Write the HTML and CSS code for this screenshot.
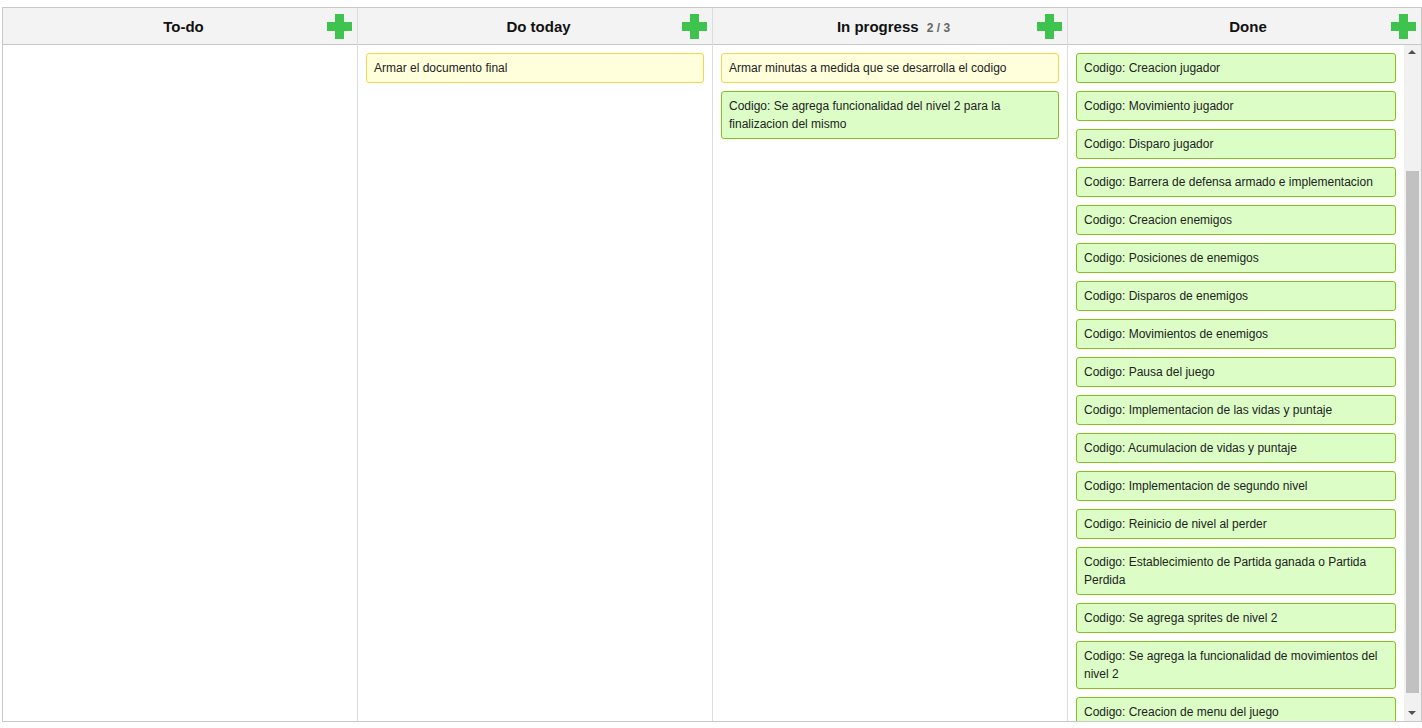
FILE: index.html
```html
<!DOCTYPE html>
<html>
<head>
<meta charset="utf-8">
<link rel="stylesheet" href="styles.css">
</head>
<body>
<div class="board">
  <div class="column">
    <div class="col-header"><span class="title">To-do</span><span class="add"></span></div>
    <div class="col-body"><div class="cards"></div></div>
  </div>
  <div class="column">
    <div class="col-header"><span class="title">Do today</span><span class="add"></span></div>
    <div class="col-body"><div class="cards">
      <div class="card yellow">Armar el documento final</div>
    </div></div>
  </div>
  <div class="column">
    <div class="col-header"><span class="title">In progress <span class="count">2 / 3</span></span><span class="add"></span></div>
    <div class="col-body"><div class="cards">
      <div class="card yellow">Armar minutas a medida que se desarrolla el codigo</div>
      <div class="card green">Codigo: Se agrega funcionalidad del nivel 2 para la finalizacion del mismo</div>
    </div></div>
  </div>
  <div class="column last">
    <div class="col-header"><span class="title">Done</span><span class="add"></span></div>
    <div class="col-body">
      <div class="cards">
        <div class="card green">Codigo: Creacion jugador</div>
        <div class="card green">Codigo: Movimiento jugador</div>
        <div class="card green">Codigo: Disparo jugador</div>
        <div class="card green">Codigo: Barrera de defensa armado e implementacion</div>
        <div class="card green">Codigo: Creacion enemigos</div>
        <div class="card green">Codigo: Posiciones de enemigos</div>
        <div class="card green">Codigo: Disparos de enemigos</div>
        <div class="card green">Codigo: Movimientos de enemigos</div>
        <div class="card green">Codigo: Pausa del juego</div>
        <div class="card green">Codigo: Implementacion de las vidas y puntaje</div>
        <div class="card green">Codigo: Acumulacion de vidas y puntaje</div>
        <div class="card green">Codigo: Implementacion de segundo nivel</div>
        <div class="card green">Codigo: Reinicio de nivel al perder</div>
        <div class="card green">Codigo: Establecimiento de Partida ganada o Partida Perdida</div>
        <div class="card green">Codigo: Se agrega sprites de nivel 2</div>
        <div class="card green">Codigo: Se agrega la funcionalidad de movimientos del nivel 2</div>
        <div class="card green">Codigo: Creacion de menu del juego</div>
      </div>
      <div class="scrollbar">
        <div class="arrow up"></div>
        <div class="thumb"></div>
        <div class="arrow down"></div>
      </div>
    </div>
  </div>
</div>
</body>
</html>
```

FILE: styles.css
```css
html, body {
  margin: 0;
  padding: 0;
  background: #fff;
  font-family: "Liberation Sans", Arial, sans-serif;
}
.board {
  margin: 7px 1px 0 2px;
  width: 1420px;
  height: 715px;
  box-sizing: border-box;
  border: 1px solid #c8c8c8;
  display: grid;
  grid-template-columns: 355px 355px 355px 353px;
}
.column {
  display: flex;
  flex-direction: column;
  border-right: 1px solid #dcdcdc;
  min-height: 0;
  overflow: hidden;
}
.column.last {
  border-right: none;
}
.col-header {
  height: 36px;
  flex: none;
  background: #f3f3f3;
  border-bottom: 1px solid #c8c8c8;
  border-right: 1px solid #c8c8c8;
  margin-right: -1px;
  display: flex;
  align-items: center;
  justify-content: center;
  position: relative;
  padding-left: 7px;
}
.column.last .col-header {
  margin-right: 0;
  border-right: none;
}
.title {
  font-weight: bold;
  font-size: 15px;
  color: #111;
}
.count {
  font-size: 12px;
  color: #666;
  margin-left: 4px;
}
.add {
  position: absolute;
  right: 5px;
  top: 6px;
  width: 25px;
  height: 25px;
}
.add::before, .add::after {
  content: "";
  position: absolute;
  background: #3fc34f;
}
.add::before {
  left: 8px;
  top: 0;
  width: 9px;
  height: 25px;
}
.add::after {
  left: 0;
  top: 8px;
  width: 25px;
  height: 9px;
}
.col-body {
  flex: 1;
  display: flex;
  min-height: 0;
  overflow: hidden;
}
.cards {
  flex: 1;
  padding: 8px 8px 8px 8px;
  display: flex;
  flex-direction: column;
  gap: 8px;
  overflow: hidden;
}
.card {
  flex: none;
  border: 1px solid;
  border-radius: 3px;
  padding: 5px 7px;
  font-size: 12px;
  line-height: 18px;
  color: #222;
}
.card.yellow {
  background: #ffffdc;
  border-color: #f6d54c;
}
.card.green {
  background: #dcfdc6;
  border-color: #85c220;
}
.scrollbar {
  flex: none;
  width: 17px;
  background: #f1f1f1;
  display: flex;
  flex-direction: column;
  align-items: center;
}
.arrow {
  width: 17px;
  height: 17px;
  position: relative;
  flex: none;
}
.arrow::after {
  content: "";
  position: absolute;
  left: 4px;
  width: 0;
  height: 0;
  border-left: 4px solid transparent;
  border-right: 4px solid transparent;
}
.arrow.up::after {
  top: 5px;
  border-bottom: 4px solid #505050;
}
.arrow.down::after {
  top: 7px;
  border-top: 4px solid #505050;
}
.thumb {
  width: 13px;
  height: 522px;
  background: #c1c1c1;
  margin-top: auto;
  margin-bottom: 11px;
}
```
